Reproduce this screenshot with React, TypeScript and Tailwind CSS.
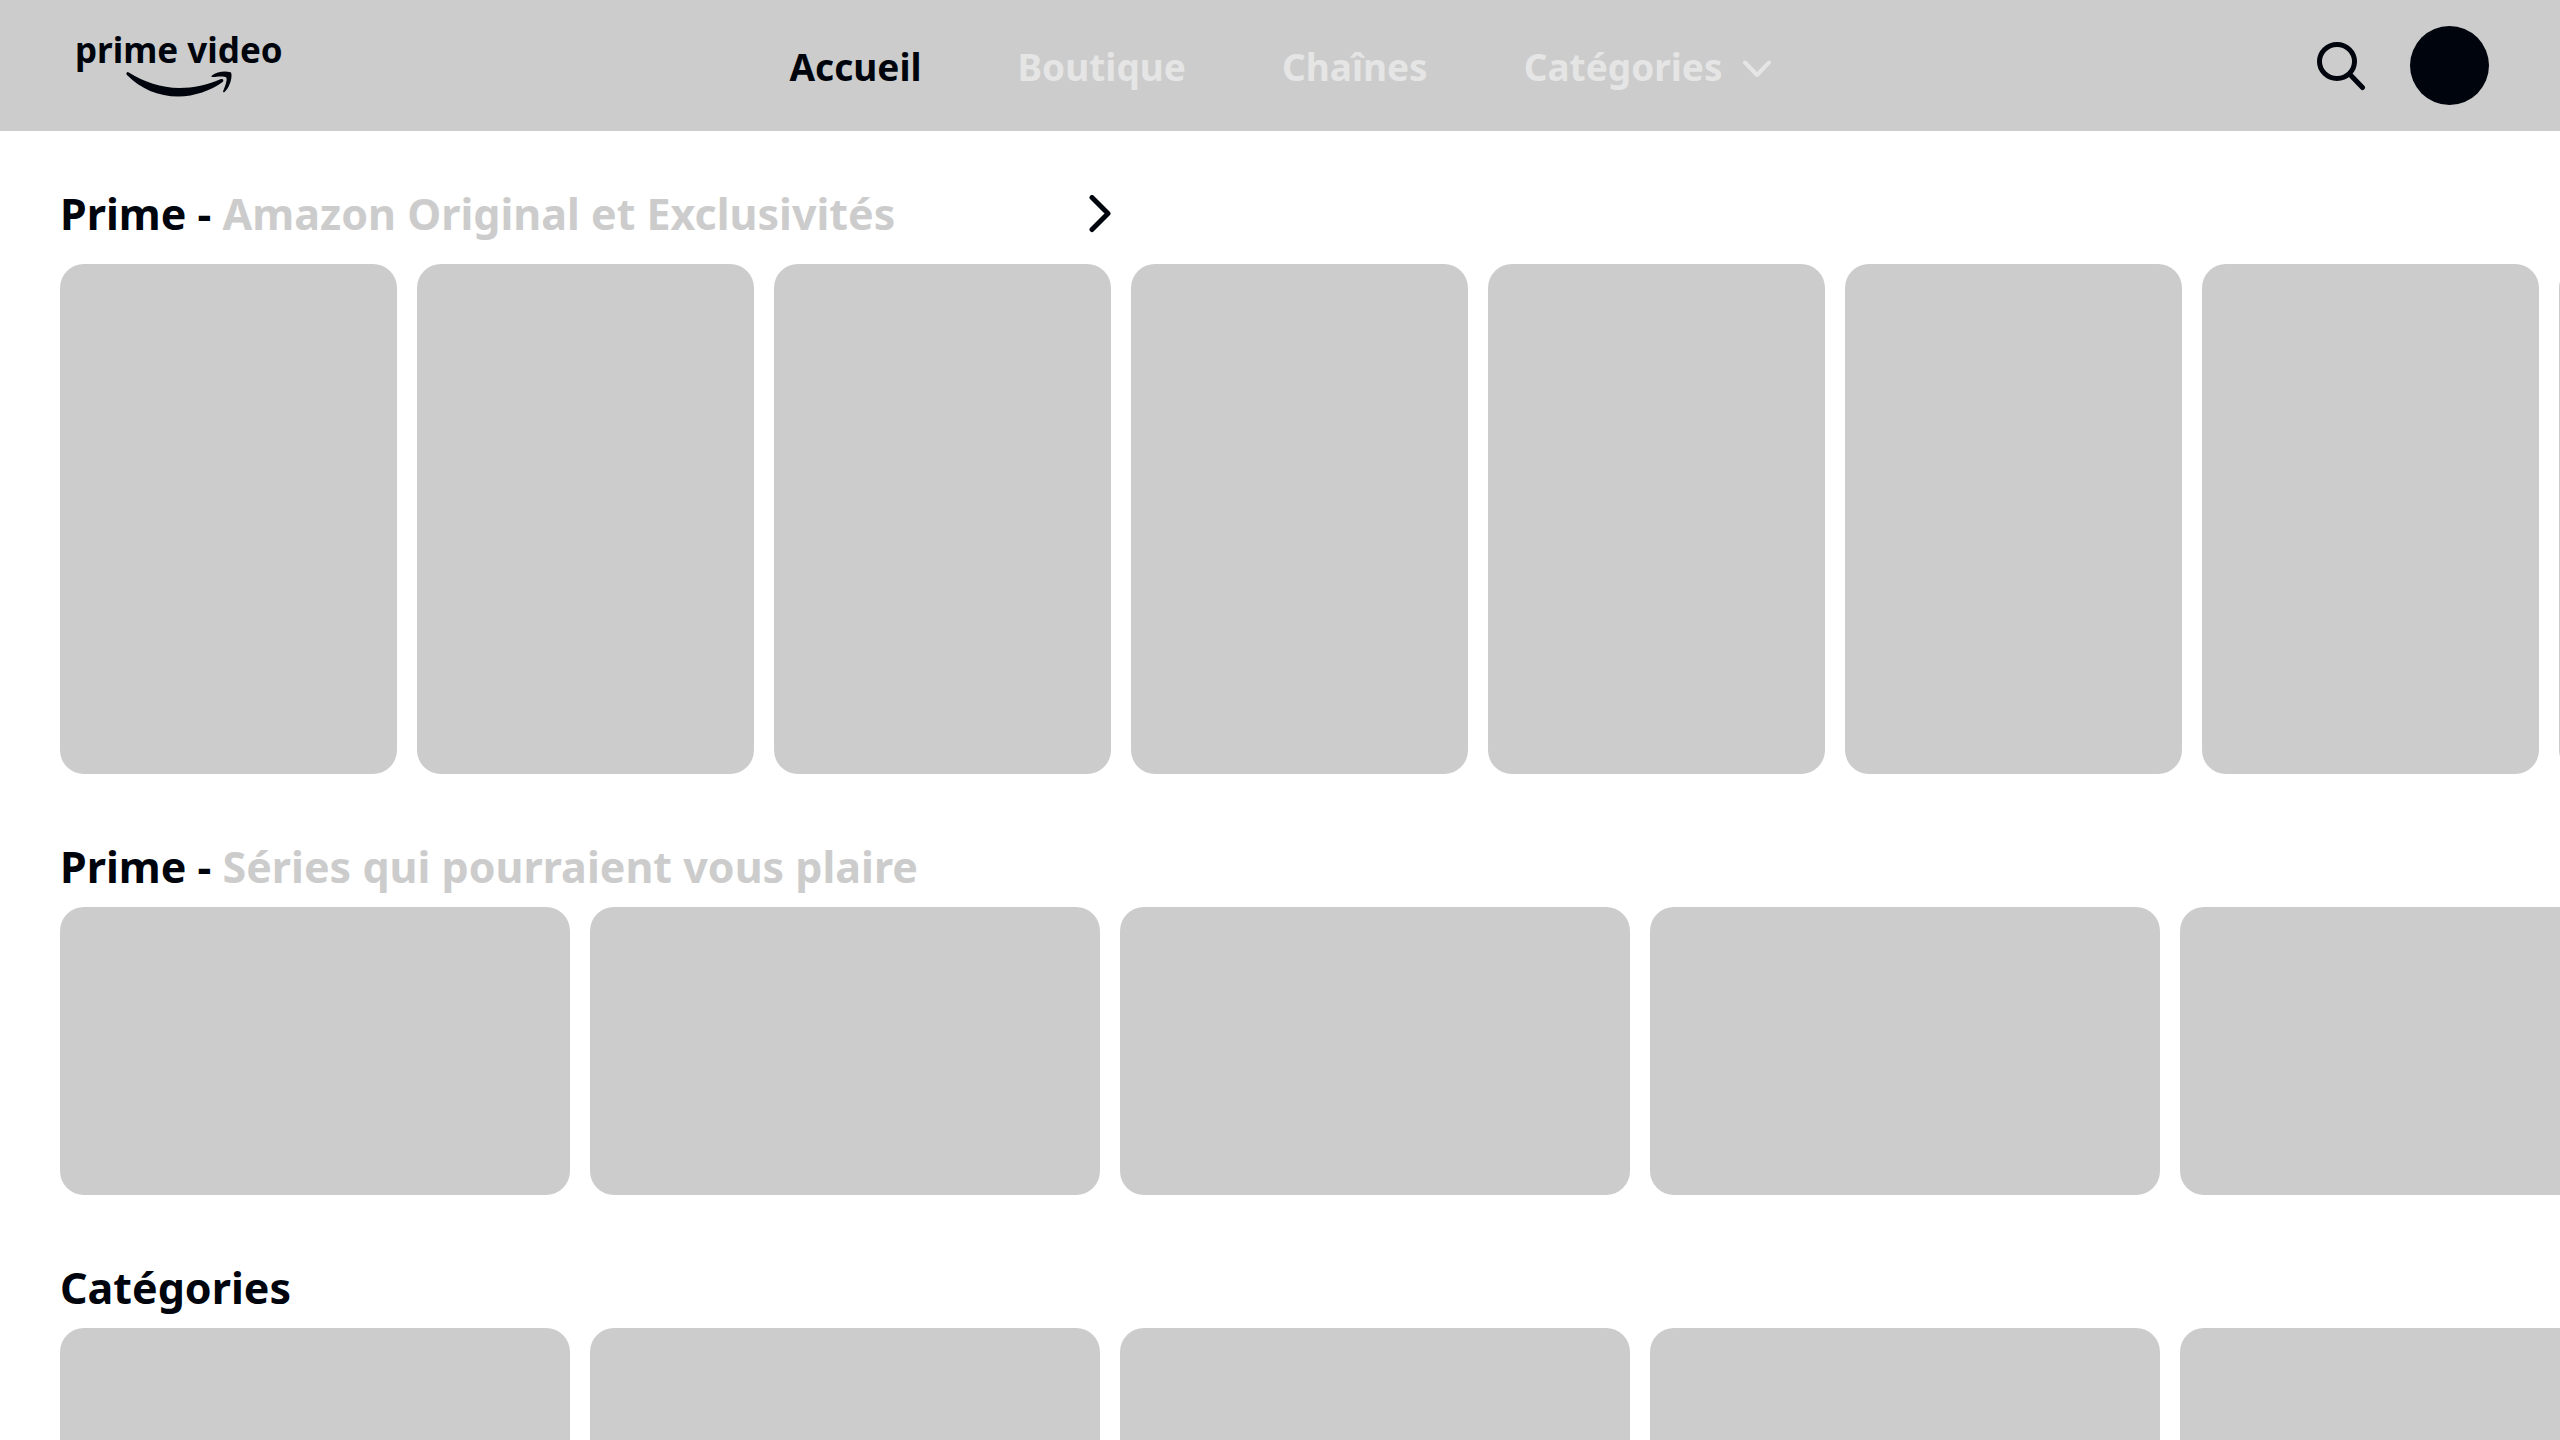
import { useState } from 'react'

interface Section {
  id: string
  prefix?: string
  title: string
  hasMore?: boolean
  poster?: boolean
  count: number
}

const NAV_ITEMS = ['Accueil', 'Boutique', 'Chaînes']

const SECTIONS: Section[] = [
  { id: 'originals', prefix: 'Prime - ', title: 'Amazon Original et Exclusivités', hasMore: true, poster: true, count: 8 },
  { id: 'series', prefix: 'Prime - ', title: 'Séries qui pourraient vous plaire', count: 5 },
  { id: 'categories', title: 'Catégories', count: 5 },
]

function Logo() {
  return (
    <a href="#" className="flex flex-col pb-1 pl-1 text-[35px] leading-10 font-bold">
      <span className="whitespace-nowrap">prime video</span>
      {/* Smile and arrow */}
      <svg className="ml-[50px]" width="110" height="28" viewBox="0 0 110 28" fill="currentColor" aria-hidden="true">
        <path d="M2.2 2.2C1 3 1.200 4.200 2.200 5.200C15.500 18.500 33 26.500 53.500 26.500C69.500 26.500 86 20.500 97.300 12.300C99.500 10.600 98 8.200 95.300 9.300C82.500 15 68.500 18 54.500 18C36 18 19 12 4.200 2.800C3.400 2.200 2.700 1.900 2.200 2.200Z" />
        <path d="M87 5.500C91.500 1.500 100.500 0.800 105.500 2.300C107.800 3.200 106.500 15.500 99.800 21.800C98.700 22.800 97.700 22.200 98.200 21C99.800 17 102.800 9.300 101.200 7.500C99.600 5.700 92 6.500 88 7C86.300 7.200 86 6.400 87 5.500Z" />
      </svg>
    </a>
  )
}

function Header() {
  const [active, setActive] = useState('Accueil')

  return (
    <header className="grid h-[131px] grid-cols-[1fr_auto_1fr] items-center bg-[#ccc] px-[71px]">
      <Logo />
      <nav className="flex items-center gap-24 pt-0.5 text-[37px] leading-[52px] font-bold">
        {NAV_ITEMS.map((item) => (
          <a
            key={item}
            href="#"
            onClick={() => setActive(item)}
            className={item === active ? 'text-[#00050d]' : 'text-[#e5e5e5]'}
          >
            {item}
          </a>
        ))}
        <button type="button" className="flex items-center gap-5 text-[#e5e5e5]">
          Catégories
          <svg className="mt-1" width="28" height="18" viewBox="0 0 28 18" fill="none" stroke="currentColor" strokeWidth="4" strokeLinecap="round" strokeLinejoin="round" aria-hidden="true">
            <path d="M2 2.500L14 15L26 2.500" />
          </svg>
        </button>
      </nav>
      <div className="flex items-center gap-11 justify-self-end">
        <button type="button" aria-label="Rechercher">
          <svg width="50" height="50" viewBox="0 0 50 50" fill="none" stroke="currentColor" strokeWidth="5" strokeLinecap="round" aria-hidden="true">
            <ellipse cx="21" cy="20.500" rx="17.500" ry="17" />
            <path d="M34 33.500L46.500 46.500" />
          </svg>
        </button>
        <button type="button" aria-label="Profil" className="size-[79px] rounded-full bg-[#00050d]" />
      </div>
    </header>
  )
}

function Carousel({ section }: { section: Section }) {
  return (
    <section>
      <div className="flex h-[60px] w-[1051px] items-center justify-between">
        <h2 className="text-[43px] leading-[60px] font-bold whitespace-nowrap">
          {section.prefix}
          <span className={section.prefix ? 'text-[#ccc]' : ''}>{section.title}</span>
        </h2>
        {section.hasMore && (
          <button type="button" aria-label="Voir plus">
            <svg width="22" height="38" viewBox="0 0 22 38" fill="none" stroke="currentColor" strokeWidth="5" strokeLinecap="round" strokeLinejoin="round" aria-hidden="true">
              <path d="M3 2.500L19 18.500L3 34.500" />
            </svg>
          </button>
        )}
      </div>
      <div className={section.poster ? 'mt-5 flex gap-5' : 'mt-2.5 flex gap-5'}>
        {Array.from({ length: section.count }, (_, i) => (
          <div
            key={i}
            className={
              section.poster
                ? 'h-[510px] w-[337px] shrink-0 rounded-3xl bg-[#ccc]'
                : 'h-[288px] w-[510px] shrink-0 rounded-3xl bg-[#ccc]'
            }
          />
        ))}
      </div>
    </section>
  )
}

export default function App() {
  return (
    <div className="h-screen overflow-hidden bg-white font-['Noto_Sans',sans-serif] text-[#00050d]">
      <Header />
      <main className="flex flex-col gap-[63px] pt-[53px] pl-[60px]">
        {SECTIONS.map((section) => (
          <Carousel key={section.id} section={section} />
        ))}
      </main>
    </div>
  )
}
